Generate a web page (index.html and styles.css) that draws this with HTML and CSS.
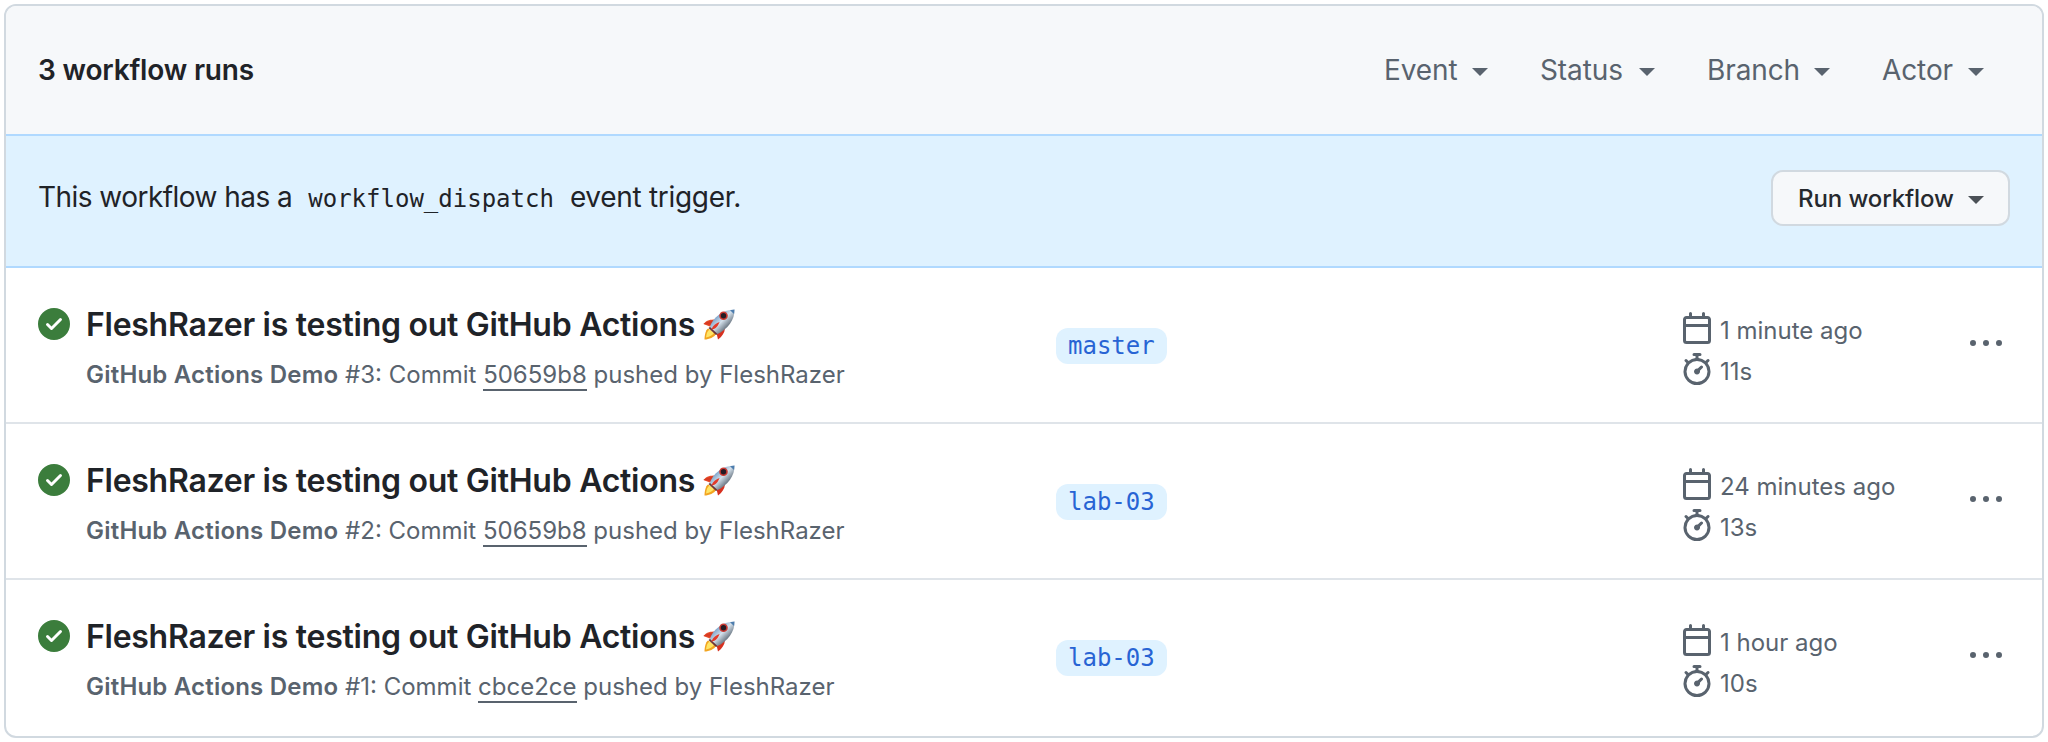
FILE: index.html
```html
<!DOCTYPE html>
<html lang="en">
<head>
<meta charset="utf-8">
<title>Workflow runs</title>
<link rel="stylesheet" href="styles.css">
</head>
<body>
<svg class="defs" aria-hidden="true">
  <symbol id="check" viewBox="0 0 16 16"><path d="M8 16A8 8 0 1 1 8 0a8 8 0 0 1 0 16Zm3.78-9.72a.751.751 0 0 0-.018-1.042.751.751 0 0 0-1.042-.018L6.75 9.19 5.28 7.72a.751.751 0 0 0-1.042.018.751.751 0 0 0-.018 1.042l2 2a.75.75 0 0 0 1.06 0Z"/></symbol>
  <symbol id="calendar" viewBox="0 0 16 16"><path d="M4.75 0a.75.75 0 0 1 .75.75V2h5V.75a.75.75 0 0 1 1.5 0V2h1.25c.966 0 1.75.784 1.75 1.75v10.5A1.75 1.75 0 0 1 13.25 16H2.75A1.75 1.75 0 0 1 1 14.25V3.75C1 2.784 1.784 2 2.75 2H4V.75A.75.75 0 0 1 4.75 0ZM2.5 7.5v6.75c0 .138.112.25.25.25h10.5a.25.25 0 0 0 .25-.25V7.5Zm10.75-4H2.75a.25.25 0 0 0-.25.25V6h11V3.75a.25.25 0 0 0-.25-.25Z"/></symbol>
  <symbol id="stopwatch" viewBox="0 0 16 16"><path d="M5.75.75A.75.75 0 0 1 6.5 0h3a.75.75 0 0 1 0 1.5h-.75v1l-.001.041a6.724 6.724 0 0 1 3.464 1.435l.007-.006.75-.75a.749.749 0 0 1 1.275.326.749.749 0 0 1-.215.734l-.75.75-.006.007a6.75 6.75 0 1 1-10.548 0L2.72 5.03l-.75-.75a.751.751 0 0 1 .018-1.042.751.751 0 0 1 1.042-.018l.75.75.007.006A6.72 6.72 0 0 1 7.25 2.541V1.5H6.5a.75.75 0 0 1-.75-.75ZM8 14.5a5.25 5.25 0 1 0-.001-10.501A5.25 5.25 0 0 0 8 14.5Zm.389-6.7 1.33-1.33a.75.75 0 1 1 1.061 1.06L9.45 8.861A1.503 1.503 0 0 1 8 10.75a1.499 1.499 0 1 1 .389-2.95Z"/></symbol>
  <symbol id="kebab" viewBox="0 0 16 16"><path d="M8 9a1.5 1.5 0 1 0 0-3 1.5 1.5 0 0 0 0 3ZM1.5 9a1.5 1.5 0 1 0 0-3 1.5 1.5 0 0 0 0 3Zm13 0a1.5 1.5 0 1 0 0-3 1.5 1.5 0 0 0 0 3Z"/></symbol>
  <linearGradient id="hull" x1="0" y1="0" x2="1" y2="1"><stop offset=".2" stop-color="#5f8fc0"/><stop offset=".48" stop-color="#d3e0eb"/><stop offset=".68" stop-color="#77838f"/></linearGradient>
  <symbol id="rocket" viewBox="0 0 32 32">
    <path d="M12 10.500C8 10.500 3.500 11 .500 15L8 18Z" fill="#e8502c"/>
    <path d="M3.500 13 11 11 8 16 .500 15Z" fill="#d93a22"/>
    <path d="M22 19.500C21.500 24 19 27.500 15 30.500L13.500 24Z" fill="#d7301f"/>
    <path d="M5 19.500C2.500 21 1.500 27 1.500 30.500 6 30.500 11.500 28 13 25Z" fill="#f2a521"/>
    <path d="M6.500 20.500C4 22 3.500 25 3 28.500 7 28 9.500 26 11 24Z" fill="#ffe566"/>
    <path d="M6.500 18.500C10 8.500 19 1 31.500 .500 32 10 25 20.500 13.500 25.500Z" fill="url(#hull)"/>
    <path d="M27 1.200 31.500 .500 31 5Z" fill="#4d7dae"/>
    <path d="M7 18 14.500 25 13 26 5.500 19Z" fill="#6b3435"/>
    <path d="M8.500 20.500C10 16 13.500 14 16.500 13 15 17 13 20 8.500 20.500Z" fill="#e23b2a"/>
    <circle cx="20.500" cy="6.800" r="4.300" fill="#c93831"/>
    <circle cx="20.500" cy="6.800" r="2.700" fill="#241b25"/>
  </symbol>
</svg>
<main class="box">
  <header class="head">
    <h1 class="count">3 workflow runs</h1>
    <nav class="filters">
      <span class="filter event">Event</span>
      <span class="filter status">Status</span>
      <span class="filter branch-f">Branch</span>
      <span class="filter actor">Actor</span>
    </nav>
  </header>
  <section class="banner">
    <p class="notice"><span class="lead">This workflow has a</span><code>workflow_dispatch</code><span class="tail">event trigger.</span></p>
    <button class="run-button"><span>Run workflow</span></button>
  </section>
  <article class="row">
    <svg class="icon ok"><use href="#check"/></svg>
    <div class="info">
      <h2 class="title"><span>FleshRazer is testing out GitHub Actions</span><svg class="icon rocket"><use href="#rocket"/></svg></h2>
      <p class="sub"><b>GitHub Actions Demo</b> #3: Commit <a class="sha">50659b8</a> pushed by FleshRazer</p>
    </div>
    <div class="ref"><span class="pill">master</span></div>
    <div class="meta">
      <div class="stat"><svg class="icon"><use href="#calendar"/></svg><span>1 minute ago</span></div>
      <div class="stat"><svg class="icon"><use href="#stopwatch"/></svg><span>11s</span></div>
    </div>
    <svg class="icon more"><use href="#kebab"/></svg>
  </article>
  <article class="row">
    <svg class="icon ok"><use href="#check"/></svg>
    <div class="info">
      <h2 class="title"><span>FleshRazer is testing out GitHub Actions</span><svg class="icon rocket"><use href="#rocket"/></svg></h2>
      <p class="sub"><b>GitHub Actions Demo</b> #2: Commit <a class="sha">50659b8</a> pushed by FleshRazer</p>
    </div>
    <div class="ref"><span class="pill">lab-03</span></div>
    <div class="meta">
      <div class="stat"><svg class="icon"><use href="#calendar"/></svg><span>24 minutes ago</span></div>
      <div class="stat"><svg class="icon"><use href="#stopwatch"/></svg><span>13s</span></div>
    </div>
    <svg class="icon more"><use href="#kebab"/></svg>
  </article>
  <article class="row">
    <svg class="icon ok"><use href="#check"/></svg>
    <div class="info">
      <h2 class="title"><span>FleshRazer is testing out GitHub Actions</span><svg class="icon rocket"><use href="#rocket"/></svg></h2>
      <p class="sub"><b>GitHub Actions Demo</b> #1: Commit <a class="sha">cbce2ce</a> pushed by FleshRazer</p>
    </div>
    <div class="ref"><span class="pill">lab-03</span></div>
    <div class="meta">
      <div class="stat"><svg class="icon"><use href="#calendar"/></svg><span>1 hour ago</span></div>
      <div class="stat"><svg class="icon"><use href="#stopwatch"/></svg><span>10s</span></div>
    </div>
    <svg class="icon more"><use href="#kebab"/></svg>
  </article>
</main>
</body>
</html>
```
FILE: styles.css
```css
* { box-sizing: border-box; margin: 0; }
body {
  padding: 4px;
  background: #fff;
  color: #1f2328;
  font: 28px/42px Inter, "Liberation Sans", sans-serif;
  white-space: nowrap;
}
.defs { display: block; width: 0; height: 0; }
.icon { display: block; width: 32px; height: 32px; fill: #59636e; flex: none; }
.box {
  width: 2040px;
  height: 734px;
  border: 2px solid #d1d9e0;
  border-radius: 12px;
  overflow: hidden;
}
.head {
  display: flex;
  align-items: center;
  justify-content: space-between;
  height: 128px;
  padding: 0 58px 0 32px;
  background: #f6f8fa;
}
.count { font-size: 28px; font-weight: 600; letter-spacing: -0.18px; }
.filters { display: flex; gap: 52px; color: #59636e; letter-spacing: -0.1px; }
.filter { display: flex; align-items: center; justify-content: space-between; }
.filter::after, .run-button::after {
  content: "";
  border: 8px solid transparent;
  border-top-color: currentColor;
  border-bottom: 0;
  margin-top: 4px;
}
.event { width: 104px; }
.status { width: 115px; }
.branch-f { width: 123px; }
.actor { width: 102px; }
.banner {
  display: flex;
  align-items: center;
  justify-content: space-between;
  height: 134px;
  padding: 0 32px;
  background: #dff2ff;
  border: solid #b0d9ff;
  border-width: 2px 0;
}
.notice { display: flex; align-items: baseline; margin-top: -6px; letter-spacing: -0.3px; }
.lead { letter-spacing: -0.54px; }
.notice code { font: 24px/42px "DejaVu Sans Mono", monospace; letter-spacing: 0; margin: 0 16px; }
.run-button {
  display: flex;
  align-items: center;
  justify-content: space-between;
  width: 239px;
  height: 56px;
  margin-top: -6px;
  padding: 0 24px 0 25px;
  border: 2px solid #d1d9e0;
  border-radius: 12px;
  background: #f6f8fa;
  color: #25292e;
  font: 500 24px/42px Inter, "Liberation Sans", sans-serif;
  letter-spacing: -0.1px;
}
.run-button span { padding-top: 2px; }
.run-button::after { border-top-color: #4b5157; }
.row {
  display: grid;
  grid-template-columns: 48px 970px 625px 289px 32px;
  align-items: start;
  height: 156px;
  padding: 0 32px;
  border-bottom: 2px solid #dfe4e9;
}
.row:last-child { border-bottom: 0; }
.ok { margin-top: 40px; fill: #3b7d3c; }
.info { padding-top: 34px; }
.title { display: flex; align-items: center; gap: 8px; font-size: 32px; line-height: 46px; font-weight: 600; letter-spacing: -0.27px; }
.sub { margin-top: 9px; font-size: 24px; line-height: 36px; color: #59636e; }
.sub b { font-weight: 600; letter-spacing: 0.2px; }
.sha { border-bottom: 2px solid #59636e; }
.ref { display: flex; padding-top: 60px; }
.pill {
  height: 36px;
  padding: 0 12px;
  border-radius: 12px;
  background: #dff2ff;
  color: #2864d4;
  font: 24px/36px "DejaVu Sans Mono", monospace;
}
.meta { padding-top: 44px; font-size: 24px; line-height: 32px; color: #59636e; }
.stat { display: flex; align-items: flex-start; gap: 7px; height: 41px; }
.stat span { padding-top: 3px; }
.more { margin-top: 60px; }
```
